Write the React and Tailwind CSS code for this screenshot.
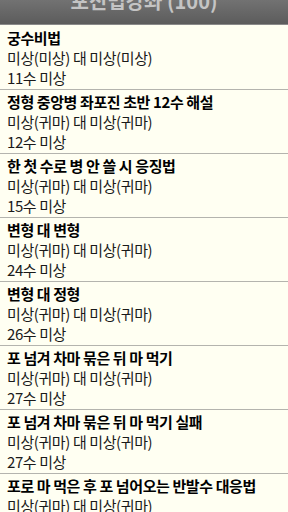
const items = [
  { title: "궁수비법", side: "미상(미상) 대 미상(미상)", moves: "11수 미상" },
  { title: "정형 중앙병 좌포진 초반 12수 해설", side: "미상(귀마) 대 미상(귀마)", moves: "12수 미상" },
  { title: "한 첫 수로 병 안 쓸 시 응징법", side: "미상(귀마) 대 미상(귀마)", moves: "15수 미상" },
  { title: "변형 대 변형", side: "미상(귀마) 대 미상(귀마)", moves: "24수 미상" },
  { title: "변형 대 정형", side: "미상(귀마) 대 미상(귀마)", moves: "26수 미상" },
  { title: "포 넘겨 차마 묶은 뒤 마 먹기", side: "미상(귀마) 대 미상(귀마)", moves: "27수 미상" },
  { title: "포 넘겨 차마 묶은 뒤 마 먹기 실패", side: "미상(귀마) 대 미상(귀마)", moves: "27수 미상" },
  { title: "포로 마 먹은 후 포 넘어오는 반발수 대응법", side: "미상(귀마) 대 미상(귀마)", moves: "27수 미상" },
];

const GameRow = ({ title, side, moves }) => {
  return (
    <div className="border-b border-[#b4b4ae] pl-[7px] pt-[2px] pb-[1px] tracking-[-0.4px]">
      <div className="h-[20px] text-[15px] leading-[20px] font-bold text-black whitespace-nowrap">{title}</div>
      <div className="h-[20px] text-[15px] leading-[20px] text-[#1a1a1a] whitespace-nowrap">{side}</div>
      <div className="h-[20px] text-[15px] leading-[20px] text-[#1a1a1a] whitespace-nowrap">{moves}</div>
    </div>
  );
};

export default function App() {
  return (
    <div
      className="w-[288px] h-[512px] overflow-hidden bg-[#fffff2]"
      style={{ fontFamily: '"Noto Sans CJK KR", "Noto Sans", sans-serif' }}
    >
      <div className="h-[25px] overflow-hidden bg-gradient-to-b from-[#727272] to-[#5c5c5c] border-b border-[#8a8a8a]">
        <div className="mt-[-13px] text-center text-[20px] leading-[28px] font-bold text-[#c4c4c4]">
          포진법강좌 (100)
        </div>
      </div>
      <div className="pt-[1px]">
        {items.map((it, i) => (
          <GameRow key={i} {...it} />
        ))}
      </div>
    </div>
  );
}
